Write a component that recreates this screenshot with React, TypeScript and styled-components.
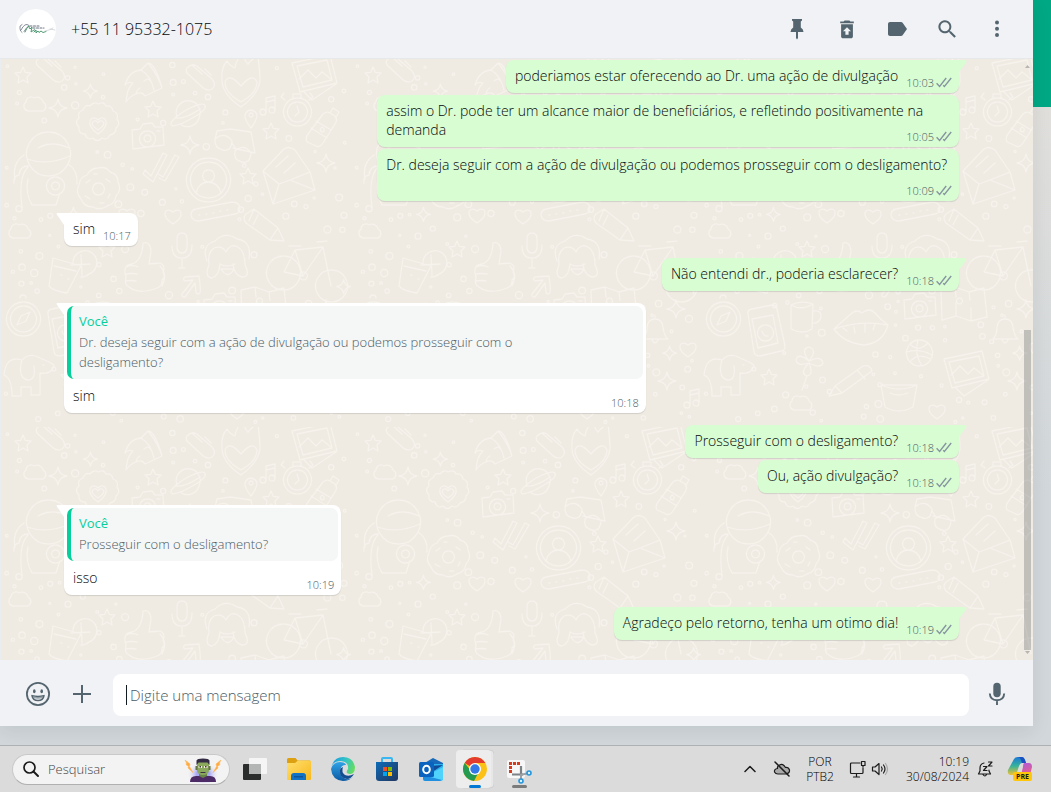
import React from "react";
import styled, { createGlobalStyle, css } from "styled-components";

const GlobalStyle = createGlobalStyle`
  *, *::before, *::after { box-sizing: border-box; }
  html, body { margin: 0; }
  body {
    font-family: "Open Sans", "Noto Sans", sans-serif;
    font-weight: 300;
    color: #05090b;
    font-size: 14px;
  }
  button, input { font: inherit; color: inherit; }
  button { border: 0; padding: 0; background: none; cursor: pointer; }
  h1, p { margin: 0; font-weight: inherit; }
`;

/* ---------- shell ---------- */

const Page = styled.div`
  display: flex;
  flex-direction: column;
  height: 100vh;
  min-height: 480px;
  overflow: hidden;
`;

const Desktop = styled.div`
  flex: 1;
  min-height: 0;
  display: flex;
  padding: 0 18px 19px 0;
  background:
    linear-gradient(#00a884, #00a884) top / 100% 107px no-repeat,
    linear-gradient(#e0dfdc 107px, #d1d7db 500px, #d1d7db);
`;

const Chat = styled.main`
  flex: 1;
  min-width: 0;
  display: flex;
  flex-direction: column;
  background: #f0f2f5;
  box-shadow: 0 6px 18px rgba(11, 20, 26, 0.08);
`;

const Header = styled.header`
  display: flex;
  align-items: center;
  height: 59px;
  padding: 0 16px;
  border-bottom: 1px solid #e6e8ea;
  background: #f0f2f5;
`;

const Avatar = styled.svg`
  width: 40px;
  height: 40px;
  margin-right: 15px;
`;

const Contact = styled.h1`
  flex: 1;
  font-size: 16px;
  line-height: 21px;
`;

const Actions = styled.nav`
  display: flex;
  gap: 10px;
`;

const IconButton = styled.button<{ $w?: number }>`
  display: flex;
  align-items: center;
  justify-content: center;
  flex: none;
  width: ${(p) => p.$w ?? 40}px;
  height: 40px;
  color: #54656f;
`;

/* ---------- conversation ---------- */

const Conversation = styled.section`
  position: relative;
  flex: 1;
  min-height: 0;
  overflow: hidden;
  display: flex;
  flex-direction: column;
  justify-content: flex-end;
  border-left: 1px solid #e9edef;
  background: #efeae2;
`;

const Wallpaper = styled.svg`
  position: absolute;
  inset: 0;
  width: 100%;
  height: 100%;
`;

const Thread = styled.div`
  position: relative;
  display: flex;
  flex-direction: column;
  padding: 0 74px 20px 63px;
`;

const Bubble = styled.article<{ $out?: boolean; $tail?: boolean; $quoted?: boolean }>`
  position: relative;
  align-self: ${(p) => (p.$out ? "flex-end" : "flex-start")};
  max-width: 65%;
  margin-top: ${(p) => (p.$tail ? 12 : 2)}px;
  padding: ${(p) => (p.$quoted ? "3px 3px" : "6px 7px 3px 9px")};
  border-radius: 8px;
  ${(p) => p.$tail && (p.$out ? "border-top-right-radius: 0;" : "border-top-left-radius: 0;")}
  background: ${(p) => (p.$out ? "#d9fdd3" : "#ffffff")};
  box-shadow: 0 1px 1px rgba(11, 20, 26, 0.13);
`;

const Tail = styled.svg<{ $out?: boolean }>`
  position: absolute;
  top: 0;
  ${(p) => (p.$out ? "right: -8px;" : "left: -8px;")}
  width: 8px;
  height: 14px;
  fill: ${(p) => (p.$out ? "#d9fdd3" : "#ffffff")};
`;

const Text = styled.p<{ $quoted?: boolean }>`
  display: flow-root;
  line-height: 19px;
  ${(p) => p.$quoted && css`padding: 7px 4px 0 6px;`}
`;

const Meta = styled.span`
  float: right;
  display: flex;
  align-items: center;
  gap: 2px;
  height: 15px;
  margin: 9px 0 0 8px;
  font-size: 11px;
  line-height: 15px;
  color: #4a5b65;
`;

const Quote = styled.blockquote`
  margin: 0;
  padding: 4px 70px 7px 8px;
  border-left: 4px solid #06cf9c;
  border-radius: 7px;
  background: #f5f6f6;
  color: #4a5b65;
  font-size: 13px;
  line-height: 20px;
`;

const QuoteAuthor = styled.strong`
  display: block;
  line-height: 22px;
  font-weight: 500;
  color: #06cf9c;
`;

const ScrollRail = styled.div`
  position: absolute;
  top: 0;
  right: 0;
  bottom: 0;
  width: 11px;
  display: flex;
  flex-direction: column;
  align-items: flex-start;
  padding: 4px 2px;
`;

const ScrollThumb = styled.span`
  flex: 0 0 54%;
  width: 7px;
  margin-top: auto;
  background: rgba(11, 20, 26, 0.2);
`;

/* ---------- composer ---------- */

const Composer = styled.form`
  display: flex;
  align-items: flex-start;
  padding: 14px 16px 10px;
  background: #f0f2f5;
`;

const Field = styled.label`
  flex: 1;
  display: flex;
  align-items: center;
  height: 42px;
  margin: 0 8px 0 9px;
  padding: 0 12px;
  border-radius: 8px;
  background: #fff;
`;

const Caret = styled.span`
  width: 1px;
  height: 20px;
  margin-left: 1px;
  background: #111b21;
`;

const Input = styled.input`
  flex: 1;
  min-width: 0;
  border: 0;
  outline: 0;
  padding: 0 3px;
  font-size: 15px;
  background: none;
  &::placeholder { color: #4a5b65; opacity: 1; }
`;

/* ---------- taskbar ---------- */

const Taskbar = styled.footer`
  display: flex;
  align-items: center;
  height: 47px;
  padding: 0 18px 0 12px;
  border-top: 1px solid #aeb1b3;
  background: #dbdbdb;
`;

const Search = styled.label`
  display: flex;
  align-items: center;
  width: 218px;
  height: 31px;
  margin-right: 3px;
  padding: 0 7px 0 10px;
  border: 1px solid #c9c9c9;
  border-bottom-color: #b0b0b0;
  border-radius: 16px;
  background: #f3f3f3;
`;

const SearchInput = styled.input`
  flex: 1;
  min-width: 0;
  padding: 0 0 0 9px;
  border: 0;
  outline: 0;
  background: none;
  font-size: 13px;
  &::placeholder { color: #444; opacity: 1; }
`;

const AppButton = styled.button`
  display: flex;
  align-items: center;
  justify-content: center;
  width: 44px;
  height: 40px;
`;

const Spacer = styled.div`
  flex: 1;
`;

const TrayButton = styled.button<{ $w: number; $end?: boolean }>`
  display: flex;
  align-items: center;
  justify-content: center;
  flex: none;
  gap: 5px;
  width: ${(p) => p.$w}px;
  height: 40px;
  color: #000;
  font-size: 12px;
  line-height: 15px;
  text-align: center;
  ${(p) => p.$end && "justify-content: flex-end; text-align: right; padding-right: 8px;"}
`;

const CopilotButton = styled(TrayButton)`
  margin-left: 14px;
`;

/* ---------- wallpaper doodles ---------- */

const SHAPES: Record<string, React.ReactNode> = {
  star: <path d="M0-8 2.4-2.6 8-2 4 2 5 8 0 5-5 8-4 2-8-2-2.4-2.6Z" />,
  spark: <path d="M0-9Q1-1 9 0 1 1 0 9-1 1-9 0-1-1 0-9Z" />,
  cloud: <path d="M-7 7a5 5 0 0 1-2-9 5 5 0 0 1 8-4 6 6 0 0 1 9 4 5 5 0 0 1 0 9Z" />,
  heart: <path d="M0 8C-14-1-7-10 0-4 7-10 14-1 0 8Z" />,
  pen: <path d="M-14-8q6-6 11-1l14 12q5 6 0 10-5 3-11-3L-13-2q-3-3-1-6Zm5-3 10 9M4-7l6 6" />,
  rocket: <path d="M-17 17q1-14 7-19-5-2-8 2 4-14 16-15L5-22q10 12 14 25L2 11q-3-5-9-2-6 2-10 8ZM-2-15Q8-9 11 5M1-4q5-4 7 1M-7 9q1-5 4-6M5-22q7 0 14 25" />,
  flame: <path d="M0 28Q-18 16-19 2q-1-14 5-20 3 5 8 7 1-9 9-15 0 8 4 11 4-5 10-8 2 16 2 25Q17 16 0 28ZM0 7Q-12-7-16 3-16 14 0 23 16 14 16 3 12-7 0 7Z" />,
  cookie: <><path d="M0-21q6-3 8 2 6-1 7 5 6 2 4 8 4 5-1 9 0 6-6 7-3 6-8 3-5 5-9 0-6 3-8-4-7 0-6-7-5-5 0-9-2-6 4-8 2-6 7-4 4-5 8-2Z" /><path d="M0 9C-15-1-6-12 0-5 6-12 15-1 0 9ZM0 5q-9-6-4-9 2-1 4 2 2-3 4-2 5 3-4 9" /></>,
  planet: <path d="M-11 2A12 12 0 1 1 11 3 12 12 0 0 1-8 9M-8 9q-10 4-9-1 3-6 17-14 14-7 17-4 2 5-11 12Q-6 9-8 9ZM-12 3Q-2 4 12-6" />,
  watch: <path d="M0-13a14 14 0 1 0 1 0M0-9a10 10 0 1 0 1 0M-4-13v-4h8v4M0-5l2 6-4 4M-12-11l-4-3M12-11l4-3M-16-14l3-4M16-14l-3-4" />,
  note: <path d="M-3 6V-8l9-2V4M-3-4l9-2M-3 6a3 3 0 1 1-3-3q2 0 3 3ZM6 4a3 3 0 1 1-3-3q2 0 3 3Z" />,
  place: <path d="M0 9Q-7 0-6-4-4-9 0-9 5-8 6-4 6 1 0 9ZM0-6a2 2 0 1 0 .1 0" />,
  bottle: <path d="M-14 13q-2-4 1-8L2-15q4-3 7-1l5 3q3 4 0 8L2 14q-4 6-9 2ZM-10-1 6 9M-5-8 10 1M9-16l3-5 6 4-3 5M1-2q-4 4 1 5 3-3-1-5" />,
  camera: <path d="M-15-7l8-1 3-5 9-1 3 4 8 0 1 18-31 4ZM0-6a8 8 0 1 0 1 0M0-2a3.500 3.500 0 1 0 1 0M10-6h3" />,
  glasses: <path d="M-18-12-5-14 16-11 20 10-2 5M-20-4q10-8 17 2-1 11-9 9-9-2-8-11ZM0 8q9-8 16 2-1 11-9 9-9-2-7-11ZM-3 0 1 6M-20-4l2-8" />,
  astro: <path d="M0-35a22 22 0 1 0 1 0M-10-19q14-8 31 0M-21-8q21 7 43-3M-20-1q-8 0-9 9-6 1-5 8M-26 40q-4-30 6-40M-24-12q-12 8-9 24M20-3q10 6 9 20M-20 12q-3 14 4 26h24l4-12M7 10a9 9 0 1 0 1 0M7 15a4 4 0 1 0 1 0" />,
  mail: <path d="M-25 0-5-21q5-5 12 0L22 1 27 19-15 33ZM-25 0-9 13 2 9 22 1M-9 13-15 33M2 9l25 10M-12-4 0-15M-4 2 7-8" />,
  person: <path d="M0-22a22 22 0 1 0 1 0M0-18a18 18 0 1 0 1 0M0-10a6 6 0 1 0 1 0M-12 13q3-11 12-11 10 0 13 11" />,
  checks: <path d="M-16 4l6 6L2-13l4 2L-8 16-18 8ZM-3 8l5 3L14-11l4 2L4 15-2 12" />,
  donut: <path d="M0-21q8-2 12 4 8 2 8 10 4 8-2 14-1 8-9 10-7 5-14 1-9 0-12-8-6-7-2-14 1-8 8-10 4-7 11-7ZM0-6a6 6 0 1 0 1 0M-12-6l4-3M8-10l4 3M12 5l-2 4M-8 10l-5-3M2 14h4M-4-15h3" />,
  remote: <path d="M-24 0q0-5 5-6l36-7q7 0 8 6 0 5-5 6l-36 7q-7 0-8-6ZM-16 0h1M-9-1h1M-2-2h1M5-4h1M12-5h1" />,
  crayon: <path d="M-17-13l8-5L15 1l6 13-14-1-24-17Q-21-9-17-13ZM-9-18l-5 12M15 1 7 13M-5-12l-5 10" />,
  bike: <path d="M-22-8a17 17 0 1 0 1 0M26 6a16 16 0 1 0 1 0M-21 8-10-14 18-17 26 22M-10-14-2 12-21 8M-2 12 18-17M-16-18h12M12-22l10-1M-2 8a4 4 0 1 0 1 0" />,
  juice: <path d="M-14-13 14-5 0 22q-14-2-18-7ZM-13-5 9 0M6-8A12 12 0 1 1 22 3 12 12 0 0 1 14 6M14-16l1 20M4-6l19-1M-6 4h1M1 8h1" />,
  thumb: <path d="M-18 6q-4-12 6-13 10-3 11-21 7-2 8 8l-2 13 11-1q6 3 3 9 3 5-1 8 1 6-5 8-18 7-28-1-5-2-3-10ZM-18-4q7-3 12 0M-18 3q6-1 11 0M-18 10q6-1 10 0M16-5q8 8 2 20" />,
  mic: <path d="M0-16q5 0 5 6v9q-1 5-5 5t-5-5v-9q0-6 5-6ZM-10-3q0 12 10 12T10-4M0 9v10M-3 19h6" />,
  monkey: <path d="M-20 2q-6-16 8-20 10-10 22-2 15 2 12 20M-18 6q-2-12 5-17 8-3 12 4 4-9 12-5 7 4 7 18 6 12-3 12-8-2-9-13M-18 6q-5 12 3 13 7-2 8-14M-7 5q7 4 15 0M-6 10q7 11 13 0Z" />,
  arrow: <path d="M-9 9 2-5-6-4q-3-2 0-4L8-9q2 14 1 17-3 2-4-1L4-2-6 12q-4 0-3-3Z" />,
  map: <path d="M-22-13-8-16 6-11 21-15 24 14 8 18-7 13-21 17ZM-8-16l1 10m0 6v13M6-11 7-3m1 8v13M-4-5a3 3 0 1 0 1 0" />,
  compass: <path d="M0-15a17 17 0 1 0 1 0M0-11a13 13 0 1 0 1 0M-6 8-2-1 7-5 3 4ZM-3-19a3 3 0 1 1 6 0" />,
  phone: <path d="M-17-17q-1-4 4-5l20-4q4 0 5 4l8 37q0 5-4 5L-5 25q-5 0-6-4ZM-13-12 8-16l5 28-20 5ZM0-6a8 8 0 1 0 1 0M-3 0q2 6 6 5" />,
  lips: <path d="M-27 2Q-16-8-9-14q5-4 10 0 8-6 13 0 6 7 13 12-5 18-24 20Q-17 16-27 2ZM-27 2Q0-7 27-2M-18 1l4 3M-7 0l1 6M4-3v8M14-3l-2 6" />,
  mug: <path d="M-12-12q10-5 22-1L9 12q-9 6-21 0ZM-12-12q10 6 22-1M10-6q9-1 8 6-2 7-9 6" />,
  bell: <path d="M-12 8q4-4 4-12Q-7-12 0-12t8 8q1 9 5 12ZM-3 9q3 6 6 0M0-12v-4" />,
  ball: <path d="M0-13a13 13 0 1 0 1 0M-13-1q14-4 26 3M-1-13q-4 14 4 26M-9-9q8 9 18-1M-9 9Q-2-1 12 6" />,
  photo: <path d="M-22-12 16-20 23 8-14 17ZM-17-9 13-15 18 5-11 12ZM-15 4-6-5 2 3 8-3 17 4M-10 17l8 8L22 9" />,
  pencil: <path d="M-22 15-16 5 12-15q7-2 9 5L-9 12ZM-16 5l7 7M6-11l8 9" />,
  flower: <path d="M0-2q-9-12 0-14 9 3 0 14 12-6 14 2-2 6-14 0 5 12-2 13-8-3 2-13-12 4-13-3 2-8 13 1M-2 13l-5 14" />,
  dog: <path d="M-22 2q2-20 18-15 8-8 18-2 10 4 14 7-2 10-14 8v22h-9v-8h-10v9h-9q0-18-8-21ZM-4-13q-5 18 6 20 8 0 6-14M17-8h1" />,
  cup: <path d="M-18-10H18l-4 22q-14 8-28 0ZM-18-10q18 8 36 0M-9-2q8 4 18 0" />,
};

type Doodle = [name: string, x: number, y: number, reach: number];

const DOODLES: Doodle[] = [
  ["star", 22, 16, 10], ["pen", 50, 9, 16], ["rocket", 142, 26, 22], ["pen", 200, 17, 14], ["flame", 240, 20, 26],
  ["photo", 313, 16, 24], ["cloud", 34, 45, 11], ["spark", 57, 49, 10], ["cookie", 97, 66, 22], ["star", 152, 50, 11],
  ["planet", 187, 56, 18], ["watch", 296, 52, 18], ["note", 268, 47, 9], ["place", 250, 60, 9], ["bottle", 320, 70, 20],
  ["star", 270, 72, 10], ["camera", 146, 78, 17], ["glasses", 234, 84, 21], ["spark", 189, 86, 10], ["astro", 47, 108, 38],
  ["mail", 287, 112, 29], ["person", 207, 121, 23], ["checks", 160, 107, 18], ["donut", 97, 130, 21], ["star", 247, 117, 8],
  ["spark", 325, 104, 9], ["heart", 126, 156, 10], ["heart", 172, 157, 10], ["remote", 214, 156, 22], ["crayon", 262, 168, 21],
  ["cloud", 19, 172, 11], ["mic", 181, 190, 16], ["monkey", 226, 200, 22], ["bike", 304, 205, 36], ["juice", 66, 212, 20],
  ["thumb", 143, 212, 22], ["star", 106, 190, 9], ["arrow", 190, 226, 12], ["map", 262, 244, 24], ["compass", 22, 258, 18],
  ["mug", 102, 258, 16], ["camera", 218, 248, 17], ["spark", 325, 250, 10], ["phone", 64, 272, 24], ["lips", 160, 268, 27],
  ["bell", 304, 272, 14], ["heart", 337, 290, 9], ["dog", 25, 314, 24], ["flower", 108, 304, 16], ["ball", 218, 294, 14],
  ["photo", 265, 312, 24], ["pencil", 150, 322, 20], ["star", 68, 318, 10], ["cup", 198, 336, 18], ["spark", 316, 322, 10],
  ["cloud", 100, 344, 12], ["note", 342, 340, 9], ["heart", 236, 352, 9],
];

const TILE_W = 350;
const TILE_H = 368;

// Fills the gaps between the large doodles with rings and small sparks.
function scatter(): [number, number, number][] {
  const placed: [number, number, number][] = [];
  let seed = 7;
  const next = () => (seed = (seed * 16807) % 2147483647) / 2147483647;
  for (let i = 0; i < 3000 && placed.length < 150; i++) {
    const x = 5 + next() * (TILE_W - 10);
    const y = 5 + next() * (TILE_H - 10);
    const r = next() < 0.15 ? 7 : 1 + next() * 2.600;
    const clear =
      DOODLES.every((d) => Math.hypot(d[1] - x, d[2] - y) > d[3] + r) &&
      placed.every((c) => Math.hypot(c[0] - x, c[1] - y) > c[2] + r + 5);
    if (clear) placed.push([x, y, r]);
  }
  return placed;
}

const FILLERS = scatter();

const Doodles = () => (
  <Wallpaper aria-hidden="true">
    <defs>
      <pattern id="doodles" width={TILE_W} height={TILE_H} patternUnits="userSpaceOnUse">
        <g fill="none" stroke="#f6f2ec" strokeWidth="1.3" strokeLinejoin="round" strokeLinecap="round">
          {DOODLES.map(([name, x, y], i) => (
            <g key={i} transform={`translate(${x} ${y})`}>{SHAPES[name]}</g>
          ))}
          {FILLERS.map(([x, y, r], i) =>
            r === 7 ? (
              <path key={i} transform={`translate(${x} ${y})`} d="M0-7Q1-1 7 0 1 1 0 7-1 1-7 0-1-1 0-7Z" />
            ) : (
              <circle key={i} cx={x} cy={y} r={r} />
            ),
          )}
        </g>
      </pattern>
    </defs>
    <rect width="100%" height="100%" fill="url(#doodles)" />
  </Wallpaper>
);

/* ---------- messages ---------- */

const Ticks = () => (
  <svg width="16" height="11" viewBox="0 0 16 11" fill="none" stroke="#8696a0" strokeWidth="1.4" aria-label="Entregue">
    <path d="M.6 6.200 3.600 9.400 10.200 1M7.200 8.200l1.200 1.200L15.200 1" />
  </svg>
);

type MessageProps = {
  time: string;
  text: string;
  out?: boolean;
  tail?: boolean;
  quote?: string;
};

const Message = ({ time, text, out, tail, quote }: MessageProps) => (
  <Bubble $out={out} $tail={tail} $quoted={!!quote}>
    {tail && (
      <Tail $out={out} viewBox="0 0 8 14" aria-hidden="true">
        <path d={out ? "M0 0H7L7.500 2 0 12Z" : "M8 0H1L.5 1 8 12Z"} />
      </Tail>
    )}
    {quote && (
      <Quote>
        <QuoteAuthor>Você</QuoteAuthor>
        {quote}
      </Quote>
    )}
    <Text $quoted={!!quote}>
      {text}
      <Meta>
        <time>{time}</time>
        {out && <Ticks />}
      </Meta>
    </Text>
  </Bubble>
);

const MESSAGES: MessageProps[] = [
  { out: true, tail: true, time: "10:03", text: "poderiamos estar oferecendo ao Dr. uma ação de divulgação" },
  { out: true, time: "10:05", text: "assim o Dr. pode ter um alcance maior de beneficiários, e refletindo positivamente na demanda" },
  { out: true, time: "10:09", text: "Dr. deseja seguir com a ação de divulgação ou podemos prosseguir com o desligamento?" },
  { tail: true, time: "10:17", text: "sim" },
  { out: true, tail: true, time: "10:18", text: "Não entendi dr., poderia esclarecer?" },
  { tail: true, time: "10:18", text: "sim", quote: "Dr. deseja seguir com a ação de divulgação ou podemos prosseguir com o desligamento?" },
  { out: true, tail: true, time: "10:18", text: "Prosseguir com o desligamento?" },
  { out: true, time: "10:18", text: "Ou, ação divulgação?" },
  { tail: true, time: "10:19", text: "isso", quote: "Prosseguir com o desligamento?" },
  { out: true, tail: true, time: "10:19", text: "Agradeço pelo retorno, tenha um otimo dia!" },
];

/* ---------- icons ---------- */

const Glyph = ({ d, size = 24 }: { d: string; size?: number }) => (
  <svg width={size} height={size} viewBox="0 0 24 24" fill="currentColor" aria-hidden="true">
    <path d={d} />
  </svg>
);

const PIN = "M7 2h10v1.500l-1.200 1V10.500q2.700 1.500 2.700 4.500H13v6l-1 1.500-1-1.500v-6H5.500q0-3 2.700-4.500V4.500L7 3.500Z";
const TRASH = "M18.800 4.400h-3.400l-1-1H9.600l-1 1H5.200v1.900h13.600ZM6.100 7.300v12.100c0 1 .9 1.900 1.900 1.900h8c1 0 1.900-.9 1.900-1.900V7.300ZM12 10.200l4 4h-2.400v3.600h-3.200v-3.600H8Z";
const LABEL = "M17.600 5.800C17.300 5.300 16.700 5 16 5L5 5C3.900 5 3 5.900 3 7v10c0 1.100.9 2 2 2h11c.7 0 1.300-.3 1.600-.8L22 12Z";
const FIND = "M15.900 14.300h-.8l-.3-.3a6.500 6.500 0 1 0-.7.7l.3.3v.8l5 5 1.500-1.500Zm-6 0a4.500 4.500 0 1 1 0-9 4.500 4.500 0 0 1 0 9Z";
const DOTS = "M12 7.500a2 2 0 1 0 0-4 2 2 0 0 0 0 4Zm0 6.200a2 2 0 1 0 0-4 2 2 0 0 0 0 4Zm0 6.200a2 2 0 1 0 0-4 2 2 0 0 0 0 4Z";

const AvatarLogo = () => (
  <Avatar viewBox="0 0 40 40" aria-hidden="true">
    <circle cx="20" cy="20" r="20" fill="#fff" />
    <g fill="none" strokeLinecap="round">
      <path d="M6 15.500q-3 1-2 4 0 3 2 4M5 21q4-8 8-4.500-3 2.500-5 6" stroke="#6a7280" strokeWidth=".8" />
      <path d="M9 23q2-5 4-6 0 3 1 3l2-2-1 5 3-2q1-1 2 1M18 23l2-2v3l2-2 1 1.500 2-1.500 2 1.500 3-1" stroke="#4f9a72" strokeWidth="1" />
      <path d="M14 17h9M17 19h11" stroke="#6a7280" strokeWidth="1.100" strokeDasharray="2 1.500" />
      <path d="M29 22q6-1 8-3M34 20l5 1" stroke="#c4ccd0" strokeWidth=".7" />
    </g>
  </Avatar>
);

const Smiley = () => (
  <svg width="26" height="26" viewBox="0 0 26 26" fill="none" stroke="currentColor" strokeWidth="1.800" aria-hidden="true">
    <circle cx="13" cy="13" r="11.100" />
    <ellipse cx="9.300" cy="10.200" rx="1.300" ry="2" fill="currentColor" stroke="none" />
    <ellipse cx="16.700" cy="10.200" rx="1.300" ry="2" fill="currentColor" stroke="none" />
    <path d="M7 14.600q6 1.600 12 0-.8 4.900-6 4.900t-6-4.900Z" strokeWidth="1.500" strokeLinejoin="round" />
    <path d="M8 15.300q5 1.200 10 0l-.6 2q-4.400.9-8.800 0Z" fill="currentColor" stroke="none" opacity=".55" />
  </svg>
);

const Plus = () => (
  <svg width="20" height="20" viewBox="0 0 20 20" stroke="currentColor" strokeWidth="2" aria-hidden="true">
    <path d="M10 1v18M1 10h18" />
  </svg>
);

const Mic = () => (
  <svg width="24" height="24" viewBox="0 0 24 24" fill="none" stroke="currentColor" aria-hidden="true">
    <rect x="8.300" y=".8" width="7.400" height="14.400" rx="3.700" fill="currentColor" stroke="none" />
    <path d="M4.800 11.500q.4 6.700 7.200 6.700t7.200-6.700M12 18v5" strokeWidth="1.900" />
  </svg>
);

const ScrollArrow = ({ down }: { down?: boolean }) => (
  <svg width="7" height="6" viewBox="0 0 7 6" fill="#b8b5b0" aria-hidden="true">
    <path d={down ? "M1 1h5L3.500 4Z" : "M1 5h5L3.500 2Z"} />
  </svg>
);

const Frankenstein = () => (
  <svg width="38" height="28" viewBox="0 0 38 28" aria-hidden="true">
    <defs>
      <radialGradient id="glow">
        <stop offset=".4" stopColor="#a9a8f5" />
        <stop offset="1" stopColor="#f3f3f3" stopOpacity="0" />
      </radialGradient>
    </defs>
    <ellipse cx="19" cy="19" rx="16" ry="12" fill="url(#glow)" />
    <path d="M6 27q0-6 6-6h14q6 0 6 6Z" fill="#4b2a66" />
    <path d="M15 17h8v4l-4 2-4-2Z" fill="#688447" />
    <path d="M13 6h12v10q-1 4-6 4t-6-4Z" fill="#8ba95c" />
    <path d="M11.500 11h2v4h-2Zm13 0h2v4h-2Z" fill="#62733f" />
    <path d="M12.500 10V5.500Q13 3.500 19 3.500t6.500 2V10l-2-2.500h-9Z" fill="#332a43" />
    <path d="M14.500 11h3.500v2h-3.500Zm5.500 0h3.500v2H20Z" fill="#f4f1d8" />
    <path d="M15.500 11h1.500v1.500h-1.500Zm5.500 0h1.500v1.500H21ZM16.500 17h5v1h-5Z" fill="#3a3344" />
    <path d="M1 5 6 9 5.500 11.500 9 17.500 4 13 4.500 11.500 2 9.500 2.500 8ZM37 5 32 9 32.500 11.500 29 17.500 34 13 33.500 11.500 36 9.500 35.500 8Z" fill="#ffab40" stroke="#ffb860" strokeWidth=".6" />
  </svg>
);

const TaskView = () => (
  <svg width="26" height="26" viewBox="0 0 26 26" aria-hidden="true">
    <rect x="1" y="8" width="18" height="16" rx="1" fill="#2b2d2c" />
    <rect x="7" y="2" width="18" height="16" rx="1" fill="#f5f5f5" />
    <path d="M7 8h12v10H8l-1-1Z" fill="#b4b5b5" />
  </svg>
);

const Folder = () => (
  <svg width="26" height="24" viewBox="0 0 26 24" aria-hidden="true">
    <defs>
      <linearGradient id="folder" x2="1" y2="1"><stop stopColor="#ffdf6e" /><stop offset="1" stopColor="#f8b91e" /></linearGradient>
    </defs>
    <path d="M1 2.500Q1 1 2.500 1h7l2 2.500H24v5H1Z" fill="#dda011" />
    <path d="M1 6h8l3-2.500h12q1 0 1 1V22q0 1-1 1H2q-1 0-1-1Z" fill="url(#folder)" />
    <path d="M5 23v-4q0-3 3-3h9q3 0 3 3v4Z" fill="#1272c4" />
    <path d="M8 19h9v1.500H8Z" fill="#0c559b" />
  </svg>
);

const Edge = () => (
  <svg width="26" height="26" viewBox="0 0 26 26" aria-hidden="true">
    <defs>
      <linearGradient id="edgeTop" x1="0" y1=".3" x2="1" y2=".6"><stop stopColor="#1a9be0" /><stop offset=".55" stopColor="#35c6c4" /><stop offset="1" stopColor="#66dd5c" /></linearGradient>
      <linearGradient id="edgeLow" x2="0" y2="1"><stop stopColor="#2fa3e6" /><stop offset="1" stopColor="#0c59a4" /></linearGradient>
    </defs>
    <path d="M1 13Q2 5 11 5q8 1 7 8-2 3-1 4 3 2 6 0 2-2 2-6Q23 1 13 1 3 1 1 13Z" fill="url(#edgeTop)" />
    <path d="M1 13q2-7 9-7 5 0 6 3-5-1-6 6 0 6 6 8 4 1 7-2-4 4-10 4Q2 24 1 13Z" fill="url(#edgeLow)" />
    <path d="M10 14q-1 8 7 9 4 0 7-5-5 3-9 1-4-3-2-8-3 1-3 3Z" fill="#124c91" />
  </svg>
);

const Store = () => (
  <svg width="24" height="26" viewBox="0 0 24 26" aria-hidden="true">
    <defs>
      <linearGradient id="store" x2="1" y2="1"><stop stopColor="#0c6bb8" /><stop offset="1" stopColor="#22365f" /></linearGradient>
    </defs>
    <path d="M7 7V3q0-1 1-1h8q1 0 1 1v4" fill="none" stroke="#3ab7f0" strokeWidth="2" />
    <path d="M1 6h22v16q0 3-3 3H4q-3 0-3-3Z" fill="url(#store)" />
    <path d="M8 11h4v4H8Z" fill="#f25022" /><path d="M13 11h4v4h-4Z" fill="#7fba00" />
    <path d="M8 16h4v4H8Z" fill="#00a4ef" /><path d="M13 16h4v4h-4Z" fill="#ffb900" />
  </svg>
);

const Outlook = () => (
  <svg width="26" height="26" viewBox="0 0 26 26" aria-hidden="true">
    <path d="m5 8 10-6 10 5v4H5Z" fill="#1769ba" />
    <path d="M12 8h13v16H9Z" fill="#2ab0ed" />
    <path d="m25 9-14 9v-8Z" fill="#124b98" />
    <path d="M25 11v12q0 2-2 2H6l4-6Z" fill="#4fd2fb" />
    <path d="m5 19 19 5-2 1H7q-2 0-2-2Z" fill="#218fdf" />
    <rect x="1" y="6" width="15" height="15" rx="1.500" fill="#0a63be" />
    <ellipse cx="8.500" cy="13.500" rx="3.300" ry="3.800" fill="none" stroke="#fff" strokeWidth="2" />
  </svg>
);

const Chrome = () => (
  <svg width="38" height="40" viewBox="0 0 38 40" aria-hidden="true">
    <rect x="4" y="1" width="34" height="38" rx="4" fill="#e7e7e7" stroke="#cfcfcf" />
    <rect x="0" y="1" width="35" height="38" rx="4" fill="#ededed" />
    <circle cx="19" cy="20" r="12" fill="#fbc116" />
    <path d="M19 20 8.600 14A12 12 0 0 1 29.400 14Z" fill="#e33b2e" />
    <path d="M19 20h-5.500L8.600 14a12 12 0 0 0 9.400 18l5-9.500Z" fill="#249b50" />
    <path d="M19 14h10.400L24 23Z" fill="#fbc116" />
    <circle cx="19" cy="20" r="6" fill="#fff" />
    <circle cx="19" cy="20" r="4.700" fill="#3478e8" />
    <rect x="13" y="36" width="12" height="3" rx="1.500" fill="#0078d4" />
  </svg>
);

const Snip = () => (
  <svg width="28" height="40" viewBox="0 0 28 40" aria-hidden="true">
    <rect x="2" y="11" width="18" height="18" rx="2" fill="#f7f7f7" />
    <path d="M5.500 24V14.500H15" fill="none" stroke="#d83b1d" strokeWidth="3" strokeDasharray="3 1" />
    <path d="M16 17v10M7 25.500h11" stroke="#7c8286" strokeWidth="2.200" />
    <path d="m15 26 7-1.500M16 30v-5" stroke="#9aa0a4" strokeWidth="2" />
    <circle cx="24" cy="24" r="2" fill="#d8f0ff" stroke="#2496dc" strokeWidth="1.600" />
    <circle cx="16" cy="32" r="2" fill="#d8f0ff" stroke="#2496dc" strokeWidth="1.600" />
    <rect x="7" y="36" width="15" height="3" rx="1.500" fill="#7b7b7b" />
  </svg>
);

const Copilot = () => (
  <svg width="26" height="26" viewBox="0 0 26 26" aria-label="Copilot PRE">
    <defs>
      <linearGradient id="copA" x2="0" y2="1"><stop stopColor="#1a78d8" /><stop offset=".5" stopColor="#36b39a" /><stop offset="1" stopColor="#f2c230" /></linearGradient>
      <linearGradient id="copB" x2=".4" y2="1"><stop stopColor="#a45be8" /><stop offset="1" stopColor="#f0607e" /></linearGradient>
    </defs>
    <path d="M7 3q1-2 4-2h4q2 0 3 3l1 3h-4q-2 0-3 3l-2 6q-1 3-4 3H3q-3-1-2-5Z" fill="url(#copA)" />
    <path d="M11 1h4q2 0 3 3l1 3h-4l-1-3q-1-3-3-3Z" fill="#1c50c0" />
    <path d="M17 7h5q3 0 3 4l-2 8q-1 3-4 3h-8q2 0 3-3l2-8q0-3 1-4Z" fill="url(#copB)" />
    <rect x="6" y="16" width="19" height="9" rx="2" fill="#ffc60a" />
    <text x="15.500" y="23" textAnchor="middle" fontSize="7" fontWeight="700" fill="#1b1b1b">PRE</text>
  </svg>
);

const Line = ({ w, h = 18, children }: { w: number; h?: number; children: React.ReactNode }) => (
  <svg width={w} height={h} viewBox={`0 0 ${w} ${h}`} fill="none" stroke="#1b1b1b" strokeWidth="1.200" strokeLinecap="round" strokeLinejoin="round" aria-hidden="true">
    {children}
  </svg>
);

const APPS: [string, React.ReactNode][] = [
  ["Visão de tarefas", <TaskView />],
  ["Explorador de Arquivos", <Folder />],
  ["Microsoft Edge", <Edge />],
  ["Microsoft Store", <Store />],
  ["Outlook", <Outlook />],
  ["Google Chrome", <Chrome />],
  ["Ferramenta de Captura", <Snip />],
];

/* ---------- page ---------- */

export default function App() {
  return (
    <Page>
      <GlobalStyle />
      <Desktop>
        <Chat>
          <Header>
            <AvatarLogo />
            <Contact>+55 11 95332-1075</Contact>
            <Actions>
              <IconButton aria-label="Fixar"><Glyph d={PIN} /></IconButton>
              <IconButton aria-label="Arquivar"><Glyph d={TRASH} /></IconButton>
              <IconButton aria-label="Etiquetar"><Glyph d={LABEL} /></IconButton>
              <IconButton aria-label="Buscar"><Glyph d={FIND} /></IconButton>
              <IconButton aria-label="Mais opções"><Glyph d={DOTS} /></IconButton>
            </Actions>
          </Header>
          <Conversation>
            <Doodles />
            <Thread>
              {MESSAGES.map((m, i) => (
                <Message key={i} {...m} />
              ))}
            </Thread>
            <ScrollRail>
              <ScrollArrow />
              <ScrollThumb />
              <ScrollArrow down />
            </ScrollRail>
          </Conversation>
          <Composer onSubmit={(e) => e.preventDefault()}>
            <IconButton type="button" $w={44} aria-label="Emojis"><Smiley /></IconButton>
            <IconButton type="button" $w={44} aria-label="Anexar"><Plus /></IconButton>
            <Field>
              <Caret />
              <Input placeholder="Digite uma mensagem" aria-label="Digite uma mensagem" />
            </Field>
            <IconButton type="button" aria-label="Gravar áudio"><Mic /></IconButton>
          </Composer>
        </Chat>
      </Desktop>
      <Taskbar>
        <Search>
          <Line w={16} h={16}>
            <circle cx="6.500" cy="6.500" r="5.500" strokeWidth="1.700" />
            <path d="m10.500 10.500 4.500 4.500" strokeWidth="1.900" />
          </Line>
          <SearchInput placeholder="Pesquisar" aria-label="Pesquisar" />
          <Frankenstein />
        </Search>
        {APPS.map(([name, icon]) => (
          <AppButton key={name} aria-label={name}>{icon}</AppButton>
        ))}
        <Spacer />
        <TrayButton $w={32} aria-label="Ícones ocultos">
          <Line w={12} h={8}><path d="m1 6.500 5-5 5 5" strokeWidth="1.500" /></Line>
        </TrayButton>
        <TrayButton $w={32} aria-label="OneDrive">
          <Line w={18}>
            <path d="M5 14h8q4-1 3.500-4-1-3-4-2.500Q10 3 6.500 5 4 6 4.500 8.500 1 9 1.500 12q1 2 3.500 2Z" fill="#a9a9a9" />
            <path d="m2 2 14 14" strokeWidth="1.500" />
          </Line>
        </TrayButton>
        <TrayButton $w={44}>POR<br />PTB2</TrayButton>
        <TrayButton $w={54} aria-label="Rede e volume">
          <Line w={17}>
            <path d="M11 3H2.500Q1.500 3 1.500 4v8.500q0 1 1 1H13q1 0 1-1V8M7.500 14v3M4.500 17h6M14 7v-1.500M12.500 1.500h3.500v4h-3.500Z" />
          </Line>
          <Line w={18}>
            <path d="M1.500 7v4H4l4 3.500v-11L4 7ZM10.500 7q1.500 2 0 4M12.500 5q3 4 0 8" />
            <path d="M14.500 3.500q4 5.500 0 11" stroke="#a8a8a8" />
          </Line>
        </TrayButton>
        <TrayButton $w={81} $end><time>10:19<br />30/08/2024</time></TrayButton>
        <TrayButton $w={16} aria-label="Notificações">
          <Line w={16}>
            <path d="M7 3Q3 4 3 8v3l-1.500 3h12L12 11v-1M6 14.500q2 3 3.500 0M6.500 6.500h3.500l-3.500 4H10M11.500 2H15l-3.500 4H15" />
          </Line>
        </TrayButton>
        <CopilotButton $w={26} aria-label="Copilot"><Copilot /></CopilotButton>
      </Taskbar>
    </Page>
  );
}
